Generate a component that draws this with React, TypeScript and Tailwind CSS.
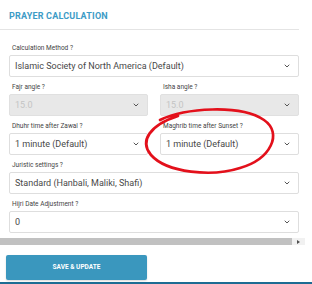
import { ChevronDown } from "lucide-react";

function Field({ label, value, disabled }: { label: string; value: string; disabled?: boolean }) {
  return (
    <div className="flex flex-col">
      <div className="h-[9px] leading-[9px] pl-[3px] text-[6.5px] text-[#444]">{label}</div>
      <div
        className={
          "mt-[2px] h-[22px] flex items-center justify-between pl-[5px] pr-[7px] rounded-[2px] border " +
          (disabled ? "bg-[#e8e8e8] border-[#e0e0e0] text-[#c4c4c4]" : "bg-white border-[#dedede] text-[#484848]")
        }
      >
        <span className="text-[9px] leading-none whitespace-nowrap">{value}</span>
        <ChevronDown size={8} strokeWidth={3} className="text-[#555] shrink-0" />
      </div>
    </div>
  );
}

export default function App() {
  return (
    <div className="relative w-[312px] h-[284px] bg-white overflow-hidden font-['Roboto',sans-serif]">
      {/* Header */}
      <div className="h-[29px] pl-[9px] pt-[10px]">
        <h2 className="text-[9px] leading-[12px] font-bold text-[#3c9bc6] tracking-[0.2px]">PRAYER CALCULATION</h2>
      </div>
      <div className="w-[299px] border-t border-[#e4e4e4]" />

      {/* Form */}
      <div className="w-[299px] pl-[9px] pt-[14px] flex flex-col gap-[6px]">
        <Field label="Calculation Method ?" value="Islamic Society of North America (Default)" />
        <div className="grid grid-cols-2 gap-x-[12px]">
          <Field label="Fajr angle ?" value="15.0" disabled />
          <Field label="Isha angle ?" value="15.0" disabled />
        </div>
        <div className="grid grid-cols-2 gap-x-[12px]">
          <Field label="Dhuhr time after Zawal  ?" value="1 minute (Default)" />
          <Field label="Maghrib time after Sunset  ?" value="1 minute (Default)" />
        </div>
        <Field label="Juristic settings ?" value="Standard (Hanbali, Maliki, Shafi)" />
        <Field label="Hijri Date Adjustment ?" value="0" />
      </div>

      {/* Horizontal scrollbar */}
      <div className="mt-[5px] w-[305px] h-[7px] bg-[#f1f1f1] flex items-center">
        <div className="w-[292px] h-full bg-[#c1c1c1]" />
        <div className="flex-1 flex items-center justify-center">
          <div className="w-0 h-0 border-y-[2.5px] border-y-transparent border-l-[3px] border-l-[#505050]" />
        </div>
      </div>

      {/* Button */}
      <div className="pl-[6px] pt-[7px]">
        <button className="w-[141px] h-[25px] rounded-[2px] bg-[#3a97be] text-white text-[6.5px] font-bold shadow-[0_1px_2px_rgba(0,0,0,0.15)]">
          SAVE &amp; UPDATE
        </button>
      </div>

      {/* Bottom bar */}
      <div className="absolute left-0 bottom-0 w-full h-[2px] bg-[#1d6c93]" />

      {/* Red annotation */}
      <svg className="absolute left-0 top-0 pointer-events-none" width="312" height="284" viewBox="0 0 312 284">
        <path
          d="M160 120 C 185 108, 240 104, 264 120 C 283 133, 271 159, 240 168 C 212 177, 167 173, 151 155 C 139 141, 150 125, 178 116"
          fill="none"
          stroke="#e3101b"
          strokeWidth="2.7"
          strokeLinecap="round"
        />
      </svg>
    </div>
  );
}
